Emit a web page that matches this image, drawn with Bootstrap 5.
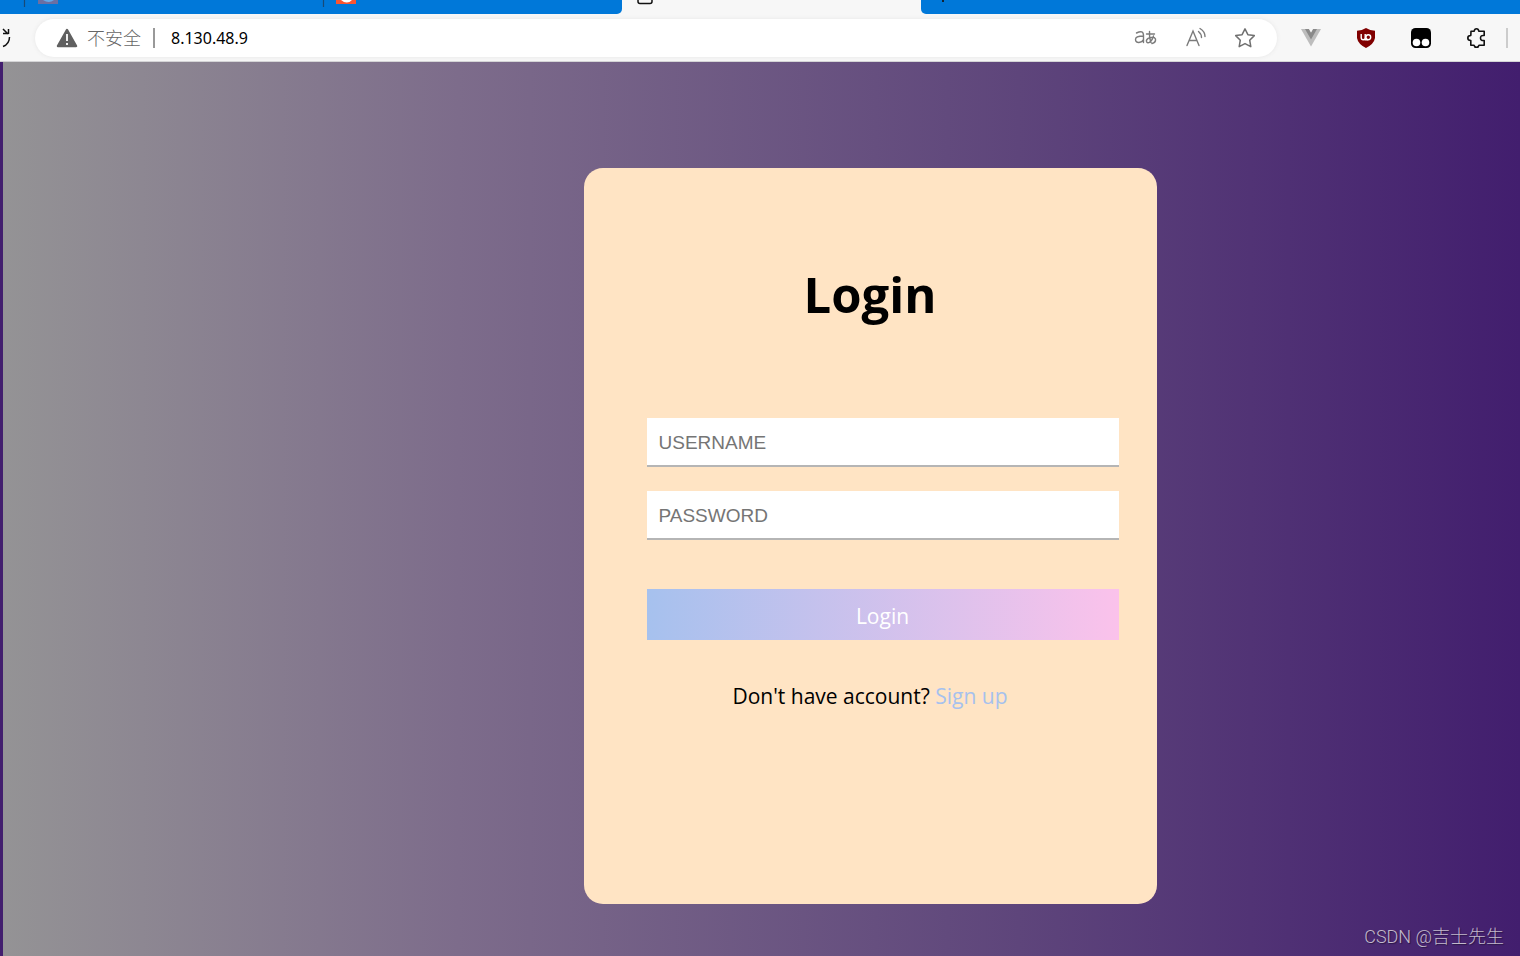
<!DOCTYPE html>
<html lang="en">
<head>
<meta charset="utf-8">
<meta name="viewport" content="width=device-width, initial-scale=1">
<title>Login</title>
<link href="https://cdn.jsdelivr.net/npm/bootstrap@5.3.0/dist/css/bootstrap.min.css" rel="stylesheet">
<style>
body { font-family: "Open Sans", "Noto Sans CJK SC", sans-serif; color: #000; background: #421e6e; }
svg { display: block; flex: none; }
.tab-strip { height: 14px; background: #f7f7f7; }
.tab-rest { background: #0078d9; }
.tab-first { flex: 0 0 622px; border-bottom-right-radius: 5px; padding-left: 23px; }
.tab-current { flex: 0 0 299px; padding-left: 14px; }
.tab-last { border-bottom-left-radius: 5px; padding-left: 21px; }
.tool-bar { height: 48px; background: #f7f7f7; border-bottom: 1px solid #d4d4d6; padding-right: 12px; }
.reload { width: 35px; }
.address { flex: 1 1 0; height: 38px; border-radius: 19px; background: #fff; padding: 0 21px 0 21px; box-shadow: 0 0 4px #e6e6e6; }
.unsafe { font: 300 18px/24px "Noto Sans CJK SC", sans-serif; color: #666; margin: 0 0 2px 9px; }
.split { width: 2px; height: 20px; background: #999; margin: 0 16px 0 12px; }
.url { font: 16px/24px "Noto Sans", sans-serif; width: 200px; border: 0; padding: 0; background: none; color: #000; outline: 0; }
.tool { border: 0; background: none; padding: 0; color: #777; }
.extensions { gap: 35px; margin: 0 18px 0 24px; }
.page-edge { height: 20px; width: 2px; background: #ccc; }
.scene { padding: 106px 0 52px; border-left: 3px solid #421e6e; background: linear-gradient(to right, #949395, #7d6c8b 30%, #5e457b 67%, #421e6e); }
.login-box { width: 573px; min-height: 736px; margin-left: calc(50% - 178px); border-radius: 19px; background: #ffe4c4; padding: 89px 38px 0 63px; }
.login-title { font-size: 49px; line-height: 74px; font-weight: 700; margin: 0 25px 87px 0; text-align: center; }
.field { border: 0; border-bottom: 2px solid #b5b5b5; border-radius: 0; height: 49px; padding: 2px 12px 0; margin-bottom: 24px; font: 19px "Liberation Sans", sans-serif; }
.field::placeholder { color: #757575; opacity: 1; }
.submit { height: 51px; margin-top: 49px; border: 0; border-radius: 0; padding: 4px 0 0; color: #fff; font-size: 21px; background: linear-gradient(to right, #a6c1ee, #fbc2eb); }
.signup { font-size: 21px; line-height: 30px; margin: 41px 25px 0 0; text-align: center; }
.signup a { color: #a6c1ee; text-decoration: none; }
.credit { right: 16px; bottom: 6px; font: 300 18px/26px Roboto, "Noto Sans CJK SC", sans-serif; color: #c2b9cb; text-shadow: 1px 1px 1px #2a1646; }
</style>
</head>
<body class="d-flex flex-column min-vh-100">
<header>
  <div class="tab-strip d-flex">
    <div class="tab-rest tab-first">
      <svg width="340" height="14" viewBox="0 0 340 14"><path d="M1.500 0V7M300.500 0V7" stroke="#174a78" stroke-width="1.200"/><path d="M15 0h20v4H15z" fill="#6b6fa3"/><path d="M20 0h11q-5 4-11 0" fill="#65a9e8"/><path d="M313 0h20v4h-20z" fill="#fc5531"/><path d="M318 0h11q-5 5-11 0" fill="#fff"/></svg>
    </div>
    <div class="tab-current">
      <svg width="18" height="14" viewBox="0 0 18 14"><path d="M2 0V1.500Q2 3.500 4 3.500H14Q16 3.500 16 1.500V0" fill="none" stroke="#111" stroke-width="1.500"/></svg>
    </div>
    <div class="tab-rest tab-last flex-fill"><svg width="4" height="14" viewBox="0 0 4 14"><path d="M0 0h2v2H0z" fill="#123"/></svg></div>
  </div>
  <div class="tool-bar d-flex align-items-center">
    <button class="tool reload" aria-label="Reload"><svg width="14" height="24" viewBox="0 0 14 24"><path d="M3 7.500H8.500M8.500 3V8M3 3L8 8M9.500 11Q9.500 18 3 20.500" fill="none" stroke="#111" stroke-width="1.500"/></svg></button>
    <div class="address d-flex align-items-center">
      <svg width="22" height="20" viewBox="0 0 22 20"><path d="M11 2L20 18H2Z" fill="#606060" stroke="#606060" stroke-width="2.500" stroke-linejoin="round"/><path d="M11 6v7M11 15v2" stroke="#fff" stroke-width="1.800"/></svg>
      <label class="unsafe" for="url">不安全</label>
      <span class="split"></span>
      <input class="url" id="url" type="text" value="8.130.48.9">
      <div class="d-flex align-items-center ms-auto">
        <button class="tool me-4" aria-label="Translate"><svg width="26" height="22" viewBox="0 0 26 22" fill="none" stroke="#7b7b7b" stroke-width="1.400" stroke-linecap="round"><path d="M2.500 6Q9.500 2.500 9.500 8.500V15.500M9.500 9Q1.500 9 1.500 12.500C1.500 17 8 16 9.500 12.500M12.500 7H20.500M15.500 4.500Q15 11 17 15.500M19.500 9C18 15 13.500 17.500 12.500 14.500C11.500 11 20 8.500 21.500 12Q22 15.500 18 16.500"/></svg></button>
        <button class="tool me-4" aria-label="Read aloud"><svg width="26" height="22" viewBox="0 0 26 22" fill="none" stroke="#7b7b7b" stroke-width="1.400" stroke-linecap="round"><path d="M3 18.500L9 4L15 18.500M5.200 13.500H12.800M14.500 4.500Q17.500 7 17.500 10.500M16 1.500Q21 4.500 21 9.500"/></svg></button>
        <button class="tool" aria-label="Favorite"><svg width="22" height="22" viewBox="0 0 22 22"><path d="M11 1.800L13.900 7.700L20.300 8.600L15.700 13.200L16.800 19.700L11 16.600L5.200 19.700L6.300 13.200L1.700 8.600L8.100 7.700Z" fill="none" stroke="#707070" stroke-width="1.500" stroke-linejoin="round"/></svg></button>
      </div>
    </div>
    <div class="extensions d-flex align-items-center">
      <button class="tool" aria-label="Vue"><svg width="20" height="20" viewBox="0 0 20 20"><path d="M0 1H20L10 18.500Z" fill="#bdbdbd"/><path d="M4 1H8L10 4.500L12 1H16L10 11.500Z" fill="#8a8a8a"/><path d="M8 1H12L10 4.500Z" fill="#f7f7f7"/></svg></button>
      <button class="tool" aria-label="Ad blocker"><svg width="20" height="22" viewBox="0 0 20 22"><path d="M10 1Q14 3.500 19 3.800V11Q18 17 10 21Q2 17 1 11V3.800Q6 3.500 10 1Z" fill="#800000"/><path d="M5.200 7V10.500Q5.200 12.700 7.200 12.700T9.200 10.500V7M9.200 10.200V12.700H12.500" fill="none" stroke="#fff" stroke-width="1.400"/><circle cx="12.300" cy="10.200" r="2.400" fill="none" stroke="#fff" stroke-width="1.400"/></svg></button>
      <button class="tool" aria-label="Scripts"><svg width="20" height="20" viewBox="0 0 20 20"><rect width="20" height="20" rx="4.500"/><circle cx="5.500" cy="14.500" r="3.800" fill="#fff"/><circle cx="14.500" cy="14.500" r="3.800" fill="#fff"/></svg></button>
      <button class="tool" aria-label="Extensions"><svg width="22" height="22" viewBox="0 0 22 22"><path d="M5 4.200H8.200Q8.500 1.800 10.500 1.800T12.800 4.200H18.200V8.500Q14.500 8 14.500 11T18.200 13.500V18.200H13Q12.500 20.300 10.500 20.300T8 18.200H4.800V13.500Q1.800 13.500 1.800 11T4.800 8.500Z" fill="none" stroke="#111" stroke-width="1.600" stroke-linejoin="round"/></svg></button>
    </div>
    <span class="page-edge"></span>
  </div>
</header>
<main class="scene position-relative flex-fill">
  <form class="login-box">
    <h1 class="login-title">Login</h1>
    <input class="field form-control" type="text" placeholder="USERNAME" aria-label="Username">
    <input class="field form-control" type="password" placeholder="PASSWORD" aria-label="Password">
    <button class="submit btn w-100 d-block" type="button">Login</button>
    <p class="signup">Don't have account? <a href="#">Sign up</a></p>
  </form>
  <div class="credit position-absolute">CSDN @吉士先生</div>
</main>
<script src="https://cdn.jsdelivr.net/npm/bootstrap@5.3.0/dist/js/bootstrap.bundle.min.js"></script>
</body>
</html>
